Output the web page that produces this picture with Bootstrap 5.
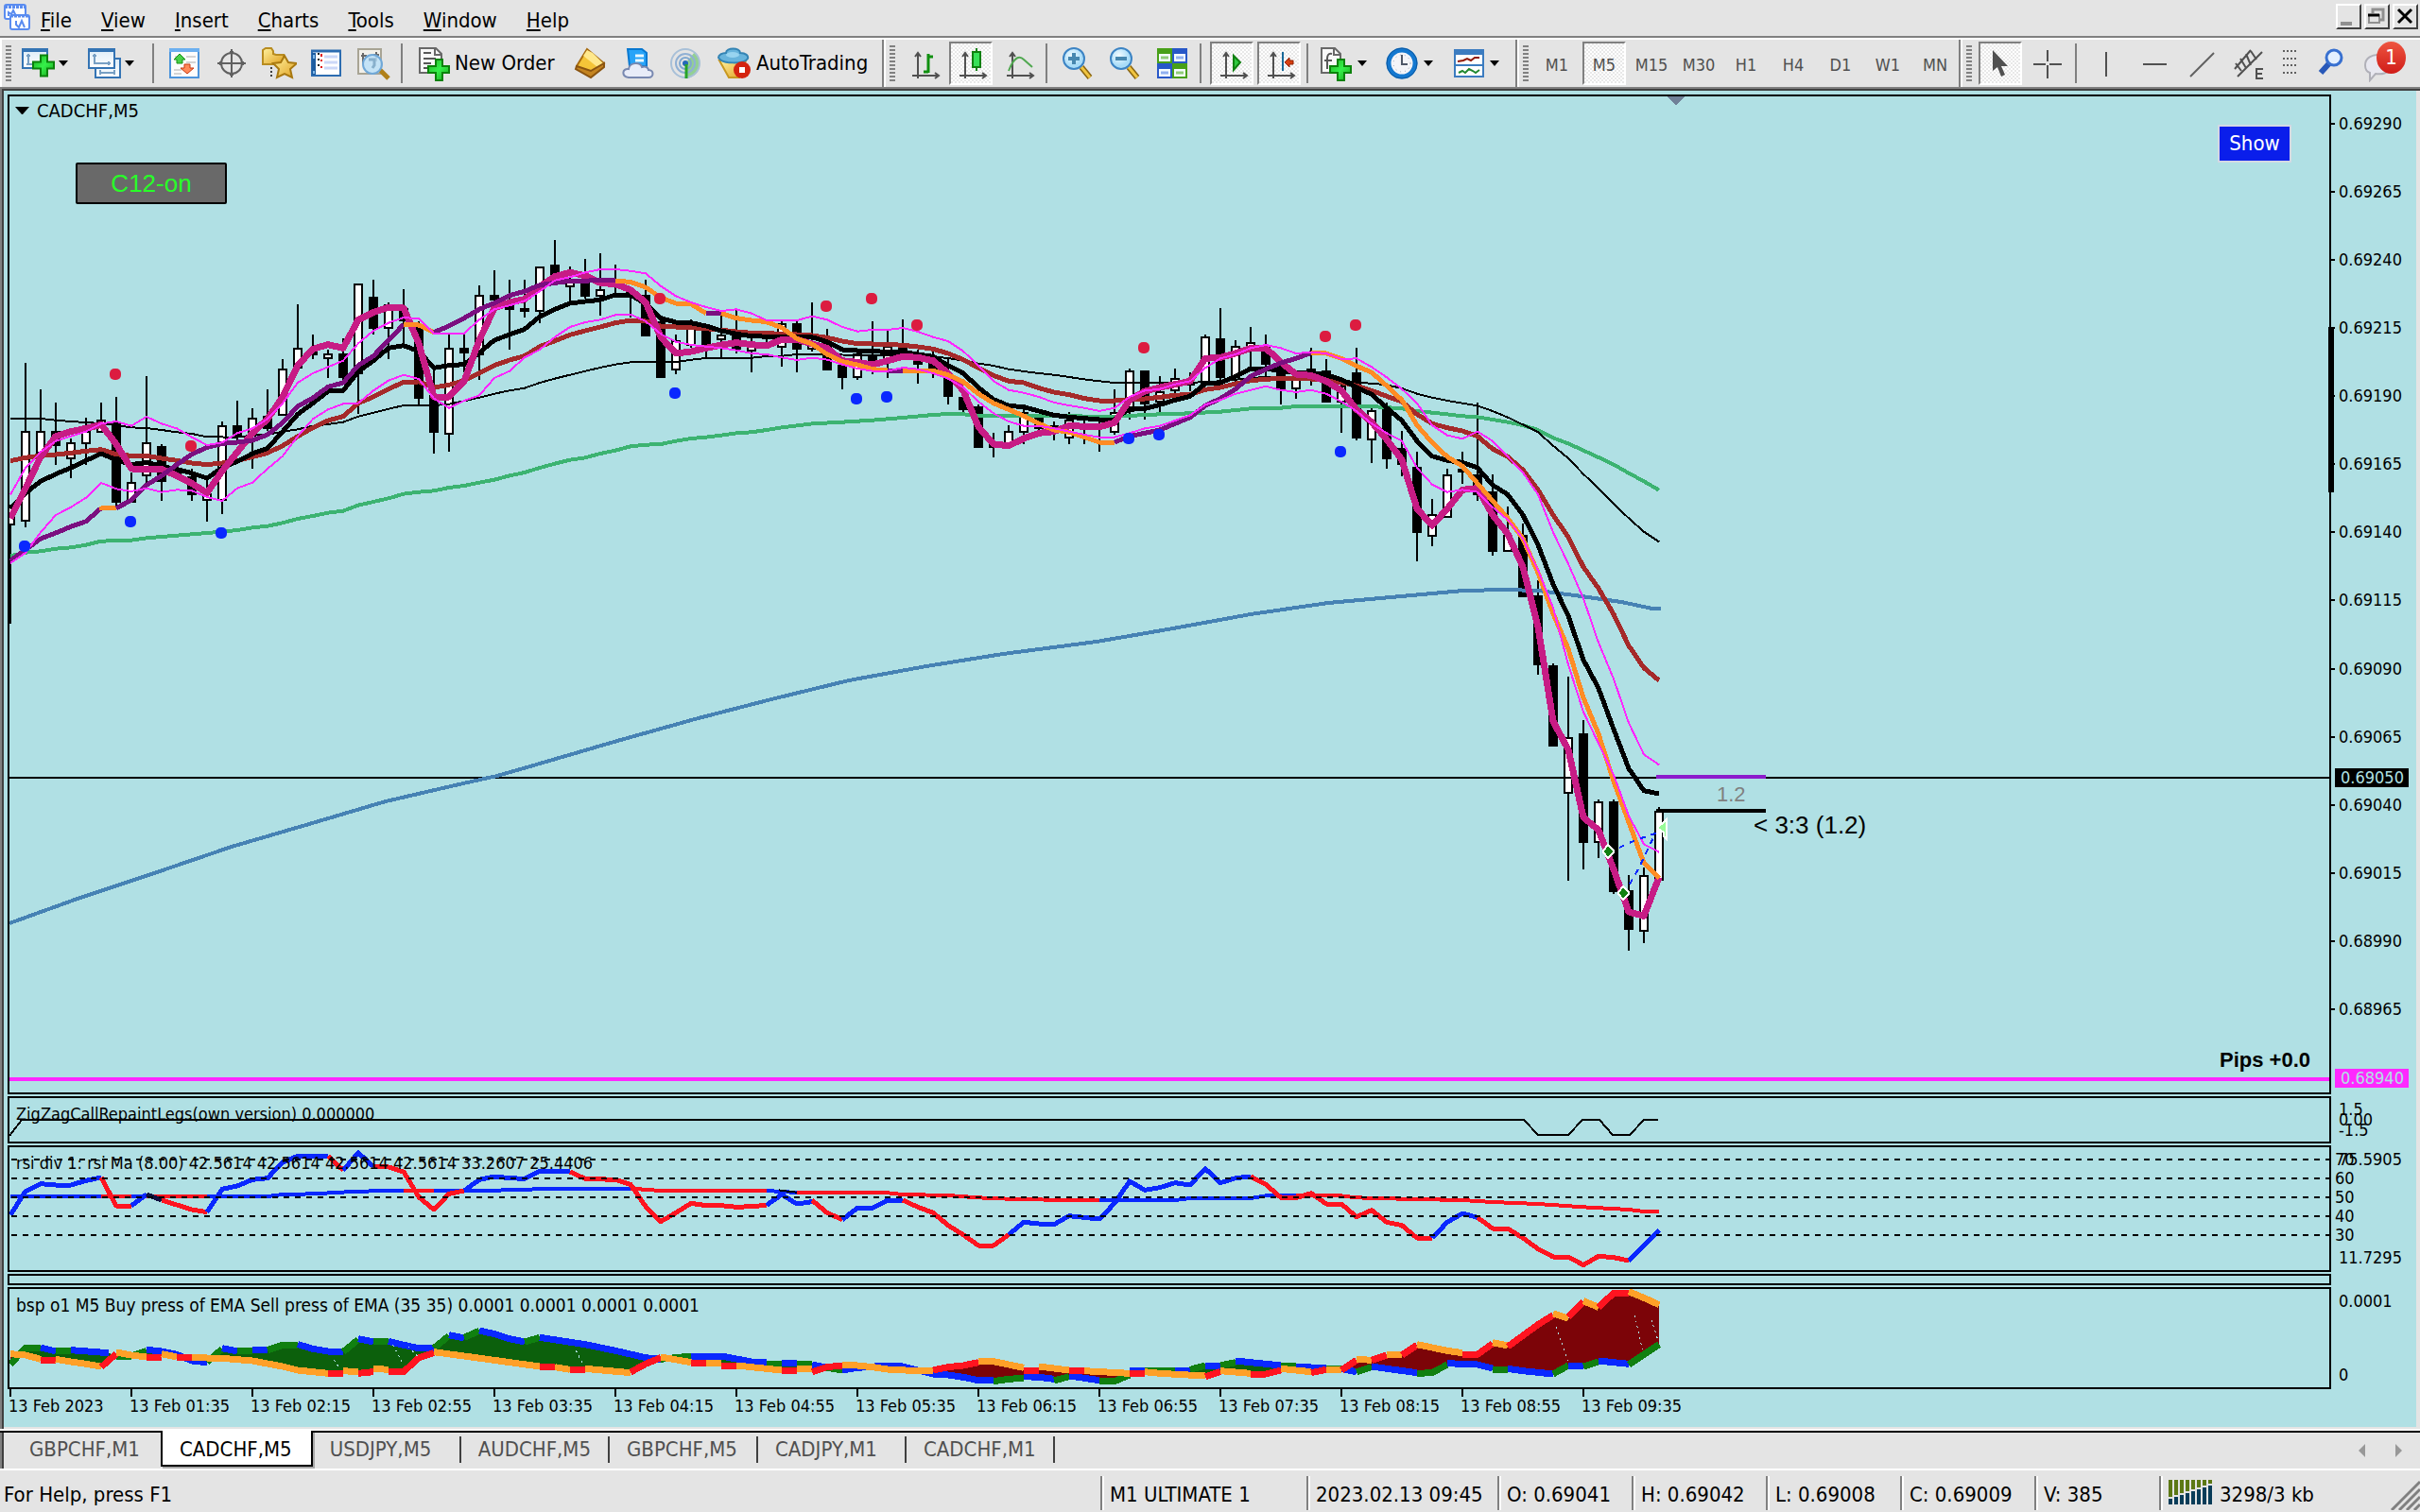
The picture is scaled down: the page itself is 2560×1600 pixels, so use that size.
<!DOCTYPE html>
<html lang="en">
<head>
<meta charset="utf-8">
<meta name="viewport" content="width=device-width, initial-scale=1">
<title>CADCHF,M5</title>
<link rel="stylesheet" href="https://cdn.jsdelivr.net/npm/bootstrap@5.3.0/dist/css/bootstrap.min.css">
<style>
  :root { --face:#e4e4e4; --sky:#b0e0e4; --edge:#808080; --deep:#404040; }
  body { background:var(--face); color:#000; font-family:"DejaVu Sans Condensed","DejaVu Sans",sans-serif; font-size:22px; line-height:24px; }
  button { font:inherit; color:inherit; }
  a { color:inherit; text-decoration:none; }
  svg { display:block; }

  .menubar { height:42px; border-bottom:2px solid #fff; box-shadow:inset 0 -2px 0 var(--edge); }
  .menubar .nav-link { color:#000; padding:8px 16px 0 15px; line-height:28px; }
  .menubar u { text-underline-offset:2px; text-decoration-thickness:2px; }
  .menubar nav { margin-left:-4px; }
  .winbtn { width:27px; height:27px; padding:0; margin-top:4px; background:var(--face); border:2px solid; border-color:#fff var(--deep) var(--deep) #fff; border-radius:0; }
  .winset { gap:3px; margin-right:2px; }

  .toolbar { height:50px; }
  .band { border-left:2px solid #fff; border-right:2px solid var(--edge); height:50px; }
  .band:last-child { border-right:0; }
  .grip { width:6px; height:38px; margin:0 5px 0 4px; background:repeating-linear-gradient(var(--edge) 0 2px, transparent 2px 4px); }
  .rule { width:2px; height:42px; margin:0 7px 0 4px; background:var(--edge); }
  .tool { width:46px; height:46px; margin:0 2px; padding:0; border:2px solid transparent; background:none; border-radius:0; }
  .tool-menu { width:66px; gap:2px; }
  .tool-order { width:163px; white-space:nowrap; gap:2px; padding-left:4px; }
  .tool-auto { width:171px; white-space:nowrap; }
  .tool-slim { width:36px; }
  .tool-on { border-color:var(--edge) #fff #fff var(--edge); background:repeating-conic-gradient(#fff 0 25%, #e8e8e8 0 50%) 0 0/4px 4px; }
  .period { font-size:18px; color:#505050; }
  .period .tool { padding-top:3px; }
  .alertdot { width:31px; height:34px; left:14px; top:-2px; background:linear-gradient(#ee5540,#d01c18); border-radius:50%; color:#fff; line-height:34px; }

  .chartwin { border:solid; border-width:2px 0 0 2px; border-color:var(--edge); box-shadow:inset 2px 2px 0 var(--deep), inset -4px -2px 0 #e4e4e4; padding:6px 4px 2px 6px; background:var(--sky); min-height:0; }
  .panes { gap:2px; min-height:0; }
  .plot { border:2px solid #000; overflow:hidden; }
  .plot > svg { position:absolute; inset:0; width:100%; height:100%; shape-rendering:crispEdges; }
  .plot .dots { shape-rendering:geometricPrecision; }
  .scale { width:90px; font-size:18px; line-height:20px; }
  .scale span { position:absolute; left:8px; transform:translateY(-50%); }
  .scale .tick::before { content:""; position:absolute; left:-8px; top:9px; width:4px; height:2px; background:#000; }
  .scale .levelmark { left:4px; }
  .scale .tag { left:4px; right:8px; padding-left:6px; background:#000; color:var(--sky); }
  .scale .tag-pink { background:#ff28ff; }
  .scale .span-bar { position:absolute; left:-3px; width:6px; background:#000; top:246px; height:175px; z-index:1; }
  .main-pane { min-height:300px; }
  .zz-pane { height:50px; }
  .rsi-pane { height:134px; }
  .idle-pane { height:12px; }
  .bsp-pane { height:108px; }
  .caption { position:absolute; left:7px; top:5px; font-size:19px; line-height:24px; white-space:nowrap; z-index:1; }
  .cap-title { top:3px; left:6px; gap:8px; font-size:20px; }
  .zz-pane .caption, .rsi-pane .caption { font-size:18px; }
  .arial { font-family:"Liberation Sans",Arial,sans-serif; }
  .c12 { left:70px; top:70px; width:160px; height:44px; background:#696969; border:2px solid #000; border-radius:2px; color:#28ff28; font-size:26px; padding:0; }
  .showbtn { right:40px; top:30px; width:78px; height:40px; padding:0; background:#0a1eeb; border:2px solid #d4d8e4; border-radius:0; color:#fff; }
  .pips { right:20px; bottom:22px; line-height:24px; font-weight:700; }
  .timescale { height:38px; padding-left:1px; font-size:18px; }
  .timescale span { width:128px; flex:none; position:relative; padding-top:4px; white-space:nowrap; }
  .timescale span::before { content:""; position:absolute; left:1px; top:-2px; width:2px; height:8px; background:#000; }

  .tabs { height:44px; border-top:2px solid #fff; }
  .tabrow { border-top:2px solid #000; border-bottom:2px solid #fff; padding-left:13px; box-shadow:inset 2px 0 0 var(--edge), inset 4px 0 0 var(--deep); }
  .tabrow .nav-link { color:#505050; min-width:157px; padding:6px 20px 6px 18px; line-height:24px; height:38px; position:relative; }
  .tabrow .nav-link + .nav-link::after { content:""; position:absolute; right:0; top:4px; width:2px; height:28px; background:var(--deep); }
  .tabrow .nav-link.active { background:#fff; color:#000; margin-top:-2px; padding-top:8px; border:solid #000; border-width:0 2px 2px; border-radius:0; box-shadow:2px 2px 0 #a8a8a8; }
  .tabrow .nav-link.active::after { display:none; }
  .turn { background:none; border:0; padding:0; width:38px; }

  .statusbar { height:44px; padding-top:6px; }
  .statusbar .cell { height:36px; padding:8px 0 0 8px; border-left:2px solid var(--edge); box-shadow:inset 2px 0 0 #fff; white-space:nowrap; }
  .w-profile { width:218px; } .w-time { width:202px; } .w-quote { width:142px; } .w-vol { width:132px; } .w-net { width:276px; }
</style>
</head>
<body class="d-flex flex-column vh-100 overflow-hidden">

<svg width="0" height="0" class="position-absolute" aria-hidden="true">
  <defs>
    <linearGradient id="gPlus" x1="0" y1="0" x2="1" y2="1"><stop offset="0" stop-color="#1fae1f"/><stop offset=".5" stop-color="#35f04a"/><stop offset="1" stop-color="#18a018"/></linearGradient>
    <linearGradient id="gGold" x1="0" y1="0" x2="1" y2="1"><stop offset="0" stop-color="#fff3a0"/><stop offset="1" stop-color="#e0a020"/></linearGradient>
    <linearGradient id="gWin" x1="0" y1="0" x2="0" y2="1"><stop offset="0" stop-color="#dcecf8"/><stop offset="1" stop-color="#fff"/></linearGradient>
    <radialGradient id="gLens" cx=".4" cy=".35"><stop offset="0" stop-color="#f2fbff"/><stop offset="1" stop-color="#a8dcf8"/></radialGradient>
    <symbol id="plus" viewBox="0 0 24 24"><path d="M9 1h7v7h7v7h-7v8h-7v-8h-8v-7h8z" fill="url(#gPlus)" stroke="#0b820b" stroke-width="2"/></symbol>
    <symbol id="axes" viewBox="0 0 36 36"><path d="M12 8v26M6 31h28" stroke="#505050" stroke-width="2" fill="none"/><path d="M9 11l3-4 3 4M30 28l4 3-4 3" fill="none" stroke="#505050" stroke-width="2"/></symbol>
    <symbol id="lens" viewBox="0 0 36 36"><path d="M22 22l9 11" stroke="#8a6510" stroke-width="6"/><path d="M22 22l9 11" stroke="#f0c440" stroke-width="3"/><circle cx="14" cy="13" r="11" fill="url(#gLens)" stroke="#3c84c4" stroke-width="2"/></symbol>
    <symbol id="caret" viewBox="0 0 12 8"><path d="M1 1h10L6 7z" fill="#000"/></symbol>
  </defs>
</svg>

<header class="menubar d-flex flex-shrink-0">
  <svg class="mt-1 ms-1 flex-shrink-0" width="28" height="28" viewBox="0 0 28 28"><rect x="1" y="1" width="22" height="15" rx="2" fill="#fff" stroke="#5a8cf0" stroke-width="2"/><path d="M1 3h22" stroke="#5a8cf0" stroke-width="4" stroke-dasharray="3 1"/><path d="M5 13V9l3 2 2-4 3 6" stroke="#5a8cf0" stroke-width="2" fill="none"/><rect x="7" y="12" width="20" height="15" rx="2" fill="#fff" stroke="#5a8cf0" stroke-width="2"/><path d="M7 13h20" stroke="#5a8cf0" stroke-width="3" stroke-dasharray="3 1"/><path d="M13 18v4l3 3 3-7 3 7" stroke="#5a8cf0" stroke-width="2" fill="none"/></svg>
  <nav class="d-flex" aria-label="Main menu">
    <a class="nav-link" href="#"><u>F</u>ile</a><a class="nav-link" href="#"><u>V</u>iew</a><a class="nav-link" href="#"><u>I</u>nsert</a><a class="nav-link" href="#"><u>C</u>harts</a><a class="nav-link" href="#"><u>T</u>ools</a><a class="nav-link" href="#"><u>W</u>indow</a><a class="nav-link" href="#"><u>H</u>elp</a>
  </nav>
  <div class="winset ms-auto d-flex">
    <button class="winbtn" aria-label="Minimize"><svg width="23" height="23" viewBox="0 0 23 23"><path d="M3 19h12" stroke="#909090" stroke-width="4"/></svg></button>
    <button class="winbtn" aria-label="Restore"><svg width="23" height="23" viewBox="0 0 23 23" fill="none"><path d="M7 8V4h11v11h-3" stroke="#909090" stroke-width="3"/><path d="M3 10h11v8H3z" stroke="#909090" stroke-width="2"/><path d="M2 10h12" stroke="#000" stroke-width="3"/></svg></button>
    <button class="winbtn" aria-label="Close"><svg width="23" height="23" viewBox="0 0 23 23"><path d="M4 4l14 14M18 4L4 18" stroke="#000" stroke-width="3"/></svg></button>
  </div>
</header>

<div class="toolbar d-flex flex-shrink-0" role="toolbar">
  <div class="band d-flex align-items-center pe-2">
    <i class="grip"></i>
    <button class="tool tool-menu d-flex align-items-center" aria-label="New chart"><svg width="38" height="36" viewBox="0 0 38 36"><rect x="3" y="3" width="26" height="20" fill="url(#gWin)" stroke="#3474b4" stroke-width="2"/><path d="M2 4h28" stroke="#3474b4" stroke-width="4"/><path d="M9 8v11h6M7 10h4M7 19h3" stroke="#78a0c4" stroke-width="2" fill="none"/><use href="#plus" x="13" y="8" width="24" height="25"/></svg><svg width="12" height="8"><use href="#caret"/></svg></button>
    <button class="tool tool-menu d-flex align-items-center" aria-label="Profiles"><svg width="38" height="36" viewBox="0 0 38 36"><rect x="10" y="13" width="26" height="20" fill="url(#gWin)" stroke="#3474b4" stroke-width="2"/><path d="M15 28h16M15 25v5M30 25v5" stroke="#78a0c4" stroke-width="2"/><rect x="3" y="3" width="27" height="20" fill="url(#gWin)" stroke="#3474b4" stroke-width="2"/><path d="M2 4h29" stroke="#3474b4" stroke-width="4"/><path d="M9 8v10h17M7 10h4M24 16v4" stroke="#78a0c4" stroke-width="2" fill="none"/></svg><svg width="12" height="8"><use href="#caret"/></svg></button>
    <i class="rule"></i>
    <button class="tool" aria-label="Market Watch"><svg class="m-auto" width="36" height="36" viewBox="0 0 36 36"><rect x="3" y="3" width="30" height="30" fill="#fcfcfc" stroke="#4c94dc" stroke-width="2"/><path d="M2 4h32" stroke="#6cb0f0" stroke-width="4"/><path d="M8 11h4M20 11h10M20 17h10M7 25h8M7 29h8" stroke="#d4d4d4" stroke-width="2"/><path d="M13 8l6 6h-3v4h-6v-4H7z" fill="#48d048" stroke="#189018"/><path d="M21 29l-7-6h4v-4h6v4h4z" fill="#ff8858" stroke="#c83810"/></svg></button>
    <button class="tool" aria-label="Data Window"><svg class="m-auto" width="36" height="36" viewBox="0 0 36 36" fill="none" stroke="#606060" stroke-width="2"><circle cx="18" cy="18" r="11"/><path d="M18 3v30M3 18h30"/><path d="M16 6h4M16 30h4M6 16v4M30 16v4"/></svg></button>
    <button class="tool" aria-label="Navigator"><svg class="m-auto" width="38" height="36" viewBox="0 0 38 36"><path d="M2 19V4l3-2h6l2 3v3l3 1h8v10z" fill="url(#gGold)" stroke="#b88c20" stroke-width="2"/><path d="M11 22v12" stroke="#404040" stroke-width="2" stroke-dasharray="2 2"/><path d="M25 10l4 7 9 1-7 6 2 9-8-4-8 4 2-9-6-6 8-1z" fill="url(#gGold)" stroke="#a87810" stroke-width="2"/></svg></button>
    <button class="tool" aria-label="Terminal"><svg class="m-auto" width="36" height="36" viewBox="0 0 36 36"><rect x="3" y="5" width="30" height="26" fill="#fff" stroke="#2c6cb0" stroke-width="2"/><path d="M2 5h32" stroke="#2c6cb0" stroke-width="3"/><path d="M5 7v23" stroke="#1c5ca0" stroke-width="4"/><path d="M5 9v4M5 26v3" stroke="#80b8e8" stroke-width="2"/><path d="M16 11h14M16 17h14M16 23h14" stroke="#ccd8f8" stroke-width="3"/><path d="M13 8v3M13 14v2M13 21v2" stroke="#e01818" stroke-width="2"/><path d="M9 8h2M9 14h2M9 20h2" stroke="#202020" stroke-width="2"/></svg></button>
    <button class="tool" aria-label="Strategy Tester"><svg class="m-auto" width="38" height="36" viewBox="0 0 38 36"><rect x="3" y="3" width="24" height="26" fill="#f2f0ea" stroke="#a8a494" stroke-width="2"/><path d="M8 7v12M6 10h6M22 6v10M19 9h6" stroke="#686868" stroke-width="2"/><path d="M26 25l9 9" stroke="#b08018" stroke-width="5"/><circle cx="18" cy="19" r="10" fill="#bce0f8" fill-opacity=".85" stroke="#70a8d8" stroke-width="2"/><path d="M14 14h6v6l-2 3" stroke="#88b0cc" stroke-width="3" fill="none"/></svg></button>
    <i class="rule"></i>
    <button class="tool tool-order d-flex align-items-center"><svg class="flex-shrink-0" width="38" height="38" viewBox="0 0 38 38"><path d="M3 3h17l6 6v20H3z" fill="#f8f8f8" stroke="#686868" stroke-width="2"/><path d="M19 3v7h7" fill="none" stroke="#686868" stroke-width="2"/><path d="M7 8h8M7 14h13M7 19h8M7 24h6" stroke="#585858" stroke-width="2"/><use href="#plus" x="11" y="14" width="24" height="24"/></svg>New Order</button>
    <button class="tool" aria-label="MetaEditor"><svg class="m-auto" width="36" height="36" viewBox="0 0 36 36"><path d="M14 3l18 15-14 14L3 21z" fill="#f4c438" stroke="#a86c10" stroke-width="2"/><path d="M14 4l6 3 11 11-6 4L10 10z" fill="#ffe88c"/><path d="M3 21l15 5 14-8v4L18 33 2 24z" fill="#c48420" stroke="#8a5410" stroke-width="2"/></svg></button>
    <button class="tool" aria-label="Cloud"><svg class="m-auto" width="36" height="36" viewBox="0 0 36 36"><path d="M7 3h15l5 4v14H9z" fill="#28a4f8" stroke="#0878d0" stroke-width="2"/><path d="M15 10h9M15 15h9" stroke="#e8f8ff" stroke-width="3"/><path d="M8 33c-8-1-7-10 0-9 1-7 12-8 14-2 5-2 7 2 7 3 6 0 6 8 0 8z" fill="#e8ecf8" stroke="#7888b0" stroke-width="2"/></svg></button>
    <button class="tool" aria-label="Signals"><svg class="m-auto" width="36" height="36" viewBox="0 0 36 36" fill="none"><path d="M18 18L28 6a16 16 0 0 1-9 28z" fill="#70c870" fill-opacity=".7"/><circle cx="18" cy="18" r="15" stroke="#a8c0d8" stroke-width="2"/><circle cx="18" cy="18" r="10" stroke="#90b0d4" stroke-width="2"/><circle cx="18" cy="18" r="6" stroke="#80a8d0" stroke-width="2"/><circle cx="18" cy="18" r="3" fill="#2468b8"/><path d="M19 19v15" stroke="#28a428" stroke-width="3"/></svg></button>
    <button class="tool tool-auto d-flex align-items-center gap-1 text-start"><svg class="ms-1 flex-shrink-0" width="38" height="36" viewBox="0 0 38 36"><path d="M3 15h28l-7 18H13z" fill="url(#gGold)" stroke="#c89820" stroke-width="2"/><path d="M2 12c0-3 4-5 8-5 0-6 15-6 15 0 6 0 9 3 8 6-4 6-27 6-31-1z" fill="#68b4dc" stroke="#3484b4" stroke-width="2"/><ellipse cx="17" cy="9" rx="7" ry="3" fill="#98d4f0"/><circle cx="27" cy="25" r="9" fill="#d42410"/><rect x="24" y="22" width="6" height="6" fill="#fff"/></svg>AutoTrading</button>
  </div>
  <div class="band d-flex align-items-center">
    <i class="grip"></i>
    <button class="tool" aria-label="Bar chart"><svg class="m-auto" width="36" height="36" viewBox="0 0 36 36"><use href="#axes"/><path d="M23 8v20M18 27h5M23 11h5" stroke="#109010" stroke-width="3"/></svg></button>
    <button class="tool tool-on" aria-label="Candlesticks"><svg class="m-auto" width="36" height="36" viewBox="0 0 36 36"><use href="#axes"/><path d="M24 2v24" stroke="#108010" stroke-width="2"/><rect x="20" y="6" width="8" height="16" fill="#38e058" stroke="#108010" stroke-width="2"/></svg></button>
    <button class="tool" aria-label="Line chart"><svg class="m-auto" width="36" height="36" viewBox="0 0 36 36"><use href="#axes"/><path d="M8 26C14 10 20 10 24 14l9 8" stroke="#50a850" stroke-width="2" fill="none"/></svg></button>
    <i class="rule"></i>
    <button class="tool" aria-label="Zoom in"><svg class="m-auto" width="36" height="36" viewBox="0 0 36 36"><use href="#lens"/><path d="M14 7v12M8 13h12" stroke="#4888b0" stroke-width="4"/></svg></button>
    <button class="tool" aria-label="Zoom out"><svg class="m-auto" width="36" height="36" viewBox="0 0 36 36"><use href="#lens"/><path d="M8 13h12" stroke="#4888b0" stroke-width="4"/></svg></button>
    <button class="tool" aria-label="Tile windows"><svg class="m-auto" width="36" height="36" viewBox="0 0 36 36"><path d="M2 2h16v16H2zM18 18h16v16H18z" fill="#48a018"/><path d="M18 2h16v16H18zM2 18h16v16H2z" fill="#2858c8"/><path d="M4 8h12v8H4zM20 8h12v8H20zM4 24h12v8H4zM20 24h12v8H20z" fill="#f4fbff"/><path d="M6 12h8M22 28h8" stroke="#90cc78" stroke-width="3"/><path d="M22 12h8M6 28h8" stroke="#90b0f0" stroke-width="3"/></svg></button>
    <i class="rule"></i>
    <button class="tool tool-on" aria-label="Auto scroll"><svg class="m-auto" width="36" height="36" viewBox="0 0 36 36"><use href="#axes"/><path d="M20 10v15l7-8z" fill="#30c840" stroke="#108010" stroke-width="2"/></svg></button>
    <button class="tool tool-on" aria-label="Chart shift"><svg class="m-auto" width="36" height="36" viewBox="0 0 36 36"><use href="#axes"/><path d="M22 6v20" stroke="#186898" stroke-width="2"/><path d="M24 17l5-5v3h4v4h-4v3z" fill="#d84010" stroke="#902000"/></svg></button>
    <i class="rule"></i>
    <button class="tool tool-menu d-flex align-items-center" aria-label="Indicators"><svg width="38" height="38" viewBox="0 0 38 38"><path d="M3 3h14l6 6v20H3z" fill="#f8f8f8" stroke="#686868" stroke-width="2"/><path d="M16 3v7h7" fill="none" stroke="#686868" stroke-width="2"/><path d="M14 9c-4-1-5 2-5 5v11M6 16h8" stroke="#585858" stroke-width="2" fill="none"/><use href="#plus" x="11" y="14" width="24" height="24"/></svg><svg width="12" height="8"><use href="#caret"/></svg></button>
    <button class="tool tool-menu d-flex align-items-center" aria-label="Periods"><svg width="38" height="36" viewBox="0 0 38 36"><circle cx="18" cy="18" r="14" fill="#f4f4f8" stroke="#1478d0" stroke-width="5"/><circle cx="18" cy="18" r="16" fill="none" stroke="#0c58a0" stroke-width="1"/><path d="M18 9v10h6" stroke="#505868" stroke-width="2" fill="none"/><circle cx="18" cy="18" r="9" fill="none" stroke="#98a0b0" stroke-dasharray="1 4"/></svg><svg width="12" height="8"><use href="#caret"/></svg></button>
    <button class="tool tool-menu d-flex align-items-center me-1" aria-label="Templates"><svg width="38" height="36" viewBox="0 0 38 36"><rect x="4" y="4" width="30" height="28" fill="#fff" stroke="#3c7cc0" stroke-width="2"/><path d="M3 6h32" stroke="#3c7cc0" stroke-width="6"/><path d="M4 20h30" stroke="#3c7cc0" stroke-width="2"/><path d="M7 16l6-1 4-2 4 2 4-3h5" stroke="#901808" stroke-width="2" fill="none"/><path d="M8 28l4-2 3 2 4-4 4 2 3 2 4-3" stroke="#208830" stroke-width="2" fill="none"/></svg><svg width="12" height="8"><use href="#caret"/></svg></button>
  </div>
  <div class="band d-flex align-items-center period">
    <i class="grip"></i>
    <button class="tool">M1</button><button class="tool tool-on">M5</button><button class="tool">M15</button><button class="tool">M30</button><button class="tool">H1</button><button class="tool">H4</button><button class="tool">D1</button><button class="tool">W1</button><button class="tool">MN</button>
  </div>
  <div class="band d-flex align-items-center flex-grow-1">
    <i class="grip"></i>
    <button class="tool tool-on" aria-label="Cursor"><svg class="m-auto" width="36" height="36" viewBox="0 0 36 36"><path d="M10 4v22l5-4 4 10 4-2-4-9h7z" fill="#505050"/></svg></button>
    <button class="tool" aria-label="Crosshair"><svg class="m-auto" width="36" height="36" viewBox="0 0 36 36"><path d="M18 4v12M18 20v14M3 19h13M20 19h13" stroke="#505050" stroke-width="2"/></svg></button>
    <i class="rule"></i>
    <button class="tool" aria-label="Vertical line"><svg class="m-auto" width="36" height="36" viewBox="0 0 36 36"><path d="M17 6v26" stroke="#505050" stroke-width="2"/></svg></button>
    <button class="tool" aria-label="Horizontal line"><svg class="m-auto" width="36" height="36" viewBox="0 0 36 36"><path d="M6 19h25" stroke="#505050" stroke-width="2"/></svg></button>
    <button class="tool" aria-label="Trendline"><svg class="m-auto" width="36" height="36" viewBox="0 0 36 36"><path d="M6 32L31 7" stroke="#606060" stroke-width="2"/></svg></button>
    <button class="tool" aria-label="Equidistant channel"><svg class="m-auto" width="36" height="36" viewBox="0 0 36 36" fill="none" stroke="#505050" stroke-width="2"><path d="M3 24L20 4M6 32L32 6M4 18l6 8M9 13l6 10M15 8l5 12M20 5l6 9"/><path d="M33 24h-7v10h7M26 29h6"/></svg></button>
    <button class="tool tool-slim" aria-label="Fibonacci"><svg class="m-auto" width="24" height="36" viewBox="0 0 24 36"><path d="M3 5h16M3 13h16M3 20h16M3 28h16" stroke="#606060" stroke-width="2" stroke-dasharray="2 2"/></svg></button>
    <button class="tool" aria-label="Search"><svg class="m-auto" width="36" height="36" viewBox="0 0 36 36"><path d="M13 18L4 28" stroke="#2858b8" stroke-width="6"/><circle cx="18" cy="12" r="8" fill="#e4f0ff" stroke="#3870d0" stroke-width="3"/></svg></button>
    <button class="tool position-relative ms-1" aria-label="1 alert"><svg width="44" height="40" viewBox="0 0 44 40"><path d="M2 22c0-16 30-14 27 2-2 7-10 8-16 7l-6 7v-8c-3-1-5-4-5-8z" fill="#e8e8f0" stroke="#b0b0b8" stroke-width="2"/></svg><span class="alertdot position-absolute">1</span></button>
  </div>
</div>

<main class="chartwin d-flex flex-column flex-grow-1">
  <div class="panes d-flex flex-column flex-grow-1">
    <section class="main-pane d-flex flex-grow-1">
      <div class="plot position-relative flex-grow-1">
        <svg id="price" role="img" aria-label="CADCHF five minute chart"></svg>
        <span class="caption cap-title d-flex align-items-center"><svg width="15" height="8" viewBox="0 0 15 8"><path d="M0 0h15L8 8H7z"/></svg>CADCHF,M5</span>
        <button class="c12 arial position-absolute">C12-on</button>
        <button class="showbtn position-absolute">Show</button>
        <span class="pips arial position-absolute">Pips +0.0</span>
      </div>
      <div class="scale position-relative" id="priceScale"><i class="span-bar"></i></div>
    </section>
    <section class="zz-pane d-flex flex-shrink-0">
      <div class="plot position-relative flex-grow-1"><span class="caption">ZigZagCallRepaintLegs(own version) 0.000000</span><svg id="zz"></svg></div>
      <div class="scale position-relative" id="zzScale"></div>
    </section>
    <section class="rsi-pane d-flex flex-shrink-0">
      <div class="plot position-relative flex-grow-1"><span class="caption">rsi div 1: rsi Ma (8.00) 42.5614 42.5614 42.5614 42.5614 33.2607 25.4406</span><svg id="rsi"></svg></div>
      <div class="scale position-relative" id="rsiScale"></div>
    </section>
    <section class="idle-pane d-flex flex-shrink-0"><div class="plot flex-grow-1"></div><div class="scale"></div></section>
    <section class="bsp-pane d-flex flex-shrink-0">
      <div class="plot position-relative flex-grow-1"><span class="caption">bsp o1 M5 Buy press of EMA Sell press of EMA (35 35) 0.0001 0.0001 0.0001 0.0001</span><svg id="bsp"></svg></div>
      <div class="scale position-relative" id="bspScale"></div>
    </section>
    <div class="timescale d-flex flex-shrink-0" id="times"></div>
  </div>
</main>

<div class="tabs d-flex flex-column flex-shrink-0">
  <nav class="tabrow d-flex flex-grow-1" aria-label="Open charts">
    <a class="nav-link" href="#">GBPCHF,M1</a><a class="nav-link active" href="#" aria-current="page">CADCHF,M5</a><a class="nav-link" href="#">USDJPY,M5</a><a class="nav-link" href="#">AUDCHF,M5</a><a class="nav-link" href="#">GBPCHF,M5</a><a class="nav-link" href="#">CADJPY,M1</a><a class="nav-link" href="#">CADCHF,M1</a>
    <span class="ms-auto d-flex me-1"><button class="turn" aria-label="Previous tabs"><svg class="m-auto" width="8" height="14" viewBox="0 0 8 14"><path d="M7 0v14L0 7z" fill="#989898"/></svg></button><button class="turn" aria-label="Next tabs"><svg class="m-auto" width="8" height="14" viewBox="0 0 8 14"><path d="M1 0v14l7-7z" fill="#989898"/></svg></button></span>
  </nav>
</div>

<footer class="statusbar d-flex flex-shrink-0">
  <div class="flex-grow-1 pt-2 ps-1">For Help, press F1</div>
  <div class="cell w-profile">M1 ULTIMATE 1</div>
  <div class="cell w-time">2023.02.13 09:45</div>
  <div class="cell w-quote">O: 0.69041</div>
  <div class="cell w-quote">H: 0.69042</div>
  <div class="cell w-quote">L: 0.69008</div>
  <div class="cell w-quote">C: 0.69009</div>
  <div class="cell w-vol">V: 385</div>
  <div class="cell w-net d-flex position-relative pt-0"><svg id="net" class="flex-shrink-0 mt-1 me-2" width="46" height="26"></svg><span class="pt-2">3298/3 kb</span>
    <svg class="position-absolute end-0 bottom-0" width="32" height="32" viewBox="0 0 32 32"><path d="M2 32L32 2M10 32L32 10M18 32l14-14M26 32l6-6" stroke="#808080" stroke-width="3"/></svg></div>
</footer>

<script src="https://cdn.jsdelivr.net/npm/bootstrap@5.3.0/dist/js/bootstrap.bundle.min.js"></script>
<script>
// Bars are 16px apart; every series is a flat list "bar value bar value ...",
// values counted downwards in thirds of a pixel from the top of its scale.
const NS = 'http://www.w3.org/2000/svg';
const barX = i => 11 + 16 * i;
function add(parent, tag, attrs) {
  const el = document.createElementNS(NS, tag);
  for (const k in attrs) el.setAttribute(k, attrs[k]);
  return parent.appendChild(el);
}
const layer = (id, dy) => add(document.getElementById(id), 'g', { transform: `translate(-10,${-dy})` });
function points(list, base) {
  const n = list.trim().split(/[\s,]+/).map(Number), out = [];
  for (let k = 0; k < n.length; k += 2) out.push([barX(n[k]), base + n[k + 1] / 3]);
  return out;
}
const draw = (g, pts, color, w) => add(g, 'polyline', { points: pts.map(p => p.join()).join(' '), fill: 'none', stroke: color, 'stroke-width': w, 'stroke-linejoin': 'round' });
const series = (g, list, base, color, w) => draw(g, points(list, base), color, w);

/* ---- price pane ---- */
const P = layer('price', 102);
// high, body top, body bottom, low, 1 = rising
const candles = [
[0, `880 890 950 1258 1|432 650 934 953 1|517 650 720 730 1|558 650 695 755 0|670 686 736 797 1|606 645 689 755 1|558 613 652 652 1|540 618 875 887 0|780 812 875 875 1|474 686 790 815 1|692 697 808 870 0|765 770 785 790 0|768 790 852 870 0|790 848 868 935 1|618 632 868 911 1|552 631 668 680 0|576 608 660 768 1|517 600 640 650 0|420 451 598 600 1|246 386 450 460 1|342 395 410 420 0|390 403 418 480 1|354 403 478 485 0|180 182 465 594 1|168 222 322 342 0|240 248 326 420 1|198 255 300 375 0|300 310 545 565 0|440 535 653 720 0|342 386 658 714 1|342 385 402 462 0|186 218 406 486 1|138 216 234 262 0|168 235 264 390 0|168 258 270 288 0|126 128 268 306 1|42 120 165 170 0|126 165 190 240 1|102 165 222 230 0|84 200 223 280 1|120 180 190 210 1|190 205 215 290 0|168 216 347 347 0|290 300 479 479 0|342 362 455 468 1|295 305 380 385 1|312 320 380 415 0|275 343 362 415 1|262 340 390 402 0|350 375 398 462 1|350 372 380 385 0|300 306 382 444 1|300 306 388 462 0|240 370 390 395 1|324 345 455 455 0|420 440 479 516 0|390 400 479 486 1|300 410 425 468 0|330 380 425 480 1|294 375 400 410 0|390 405 438 498 0|396 430 460 480 0|420 470 539 564 0|520 540 581 595 0|565 570 701 701 0|654 685 700 732 0|630 650 690 700 1|575 590 652 690 1|600 608 640 650 0|618 630 645 678 0|588 610 670 690 1|610 625 640 690 0|615 625 640 714 0|516 590 652 660 1|450 458 590 612 1|456 457 562 612 0|474 520 558 594 1`],
[180, `270 297 340 345 1|280 310 320 342 0|164 165 320 320 1|78 175 300 310 0|180 200 300 310 1|138 183 200 270 1|162 195 260 300 0|240 250 335 384 0|285 300 333 366 1|204 272 290 324 0|240 277 377 377 0|310 325 380 474 1|204 283 491 498 0|390 399 495 570 1|380 390 557 588 0|468 520 575 612 0|534 583 791 882 0|684 729 801 834 1|588 608 741 744 1|534 585 600 636 0|378 605 670 690 0|606 660 851 864 0|708 800 850 852 1|762 800 995 995 0`],
[1080, `42 90 311 342 0|306 312 570 570 0|348 542 718 996 1|486 528 875 960 0|738 745 873 924 1|738 744 1032 1038 0|978 1028 1151 1218 0|954 980 1156 1194 1|762 775 995 996 1`]];
let bar = 0;
for (const [off, rows] of candles) for (const row of rows.split('|')) {
  const [h, t, b, l, up] = row.split(' ').map(Number), y = v => Math.round((240 + (v + off) / 3) / 2) * 2, x = barX(bar++);
  add(P, 'rect', { x: x - 1, y: y(h), width: 2, height: Math.max(2, y(l) - y(h)) });
  add(P, 'rect', { x: x - 5, y: y(t), width: 10, height: Math.max(4, y(b) - y(t)) });
  if (up) add(P, 'rect', { x: x - 3, y: y(t) + 2, width: 6, height: Math.max(2, y(b) - y(t) - 4), fill: '#fff' });
}
const across = (g, y, color, w) => add(g, 'rect', { x: 10, y: y - w / 2, width: '100%', height: w, fill: color });
across(P, 823, '#000', 2);
draw(P, [[10,977],[82,951],[163,924],[245,896],[327,872],[408,848],[490,829],[526,821],[571,808],[653,784],[735,761],[816,740],[898,720],[980,705],[1061,692],[1160,679],[1241,665],[1323,650],[1405,638],[1482,631],[1548,625],[1593,624],[1627,625],[1666,630],[1715,637],[1748,644],[1757,644]], '#4682b4', 4);
series(P, `0 1045 1 1034 2 1030 3 1022 4 1018 5 1010 6 998 8 995 9 988 10 984 11 980 12 976 13 972 14 968 15 963 16 955 17 950 18 940 19 927 20 918 21 908 22 902 23 884 24 873 25 862 26 848 27 842 28 838 29 828 30 822 31 812 32 803 33 790 34 780 35 765 36 752 37 740 38 733 39 720 40 710 41 697 42 692 43 690 44 680 45 672 46 668 47 662 48 655 49 652 50 645 51 637 53 625 55 620 57 614 59 606 61 597 62 594 63 595 64 600 73 602 76 595 78 592 80 587 82 577 84 575 85 570 90 570 92 577 93 585 95 595 96 601 97 604 98 612 99 620 100 630 101 645 102 670 103 688 104 710 105 732 106 755 107 782 108 808 109 836`, 240, '#3cb371', 4);
series(P, `0 608 1 608 2 609 3 614 4 618 5 621 6 624 7 630 8 637 9 639 10 645 11 652 12 657 13 667 15 668 16 662 17 660 18 650 19 643 20 632 21 627 22 620 23 602 24 590 25 578 26 567 28 567 29 563 30 553 31 542 32 530 33 520 34 512 35 495 36 482 37 470 38 458 39 447 40 437 41 430 44 430 45 422 46 417 49 416 50 411 51 410 52 405 58 408 60 411 61 412 62 417 63 425 64 434 65 441 66 452 67 459 68 465 69 470 70 477 71 484 72 490 73 495 78 495 79 492 80 490 81 485 82 480 83 477 86 480 88 485 89 495 90 497 91 502 92 513 93 530 94 542 95 552 96 560 97 568 98 585 99 605 100 628 101 652 102 695 103 735 104 785 105 830 106 880 107 925 108 968 109 1000`, 240, '#000', 2);
series(P, `0 743 1 733 2 727 3 723 4 718 5 712 6 707 7 722 8 727 9 727 10 735 11 742 12 750 13 755 14 750 15 743 16 730 17 718 18 695 19 665 20 638 21 615 22 602 23 560 24 540 25 515 26 493 27 492 28 510 29 502 30 488 31 465 32 440 33 423 34 410 35 380 36 362 37 343 38 330 39 318 40 305 41 297 42 300 43 315 44 318 45 320 46 323 47 328 48 333 49 337 50 338 51 340 52 342 53 345 54 352 55 363 56 371 57 372 58 373 59 376 60 381 61 388 62 402 63 422 64 448 65 472 66 490 67 495 68 512 69 525 70 533 71 545 72 552 73 552 74 548 75 546 76 541 77 535 78 532 79 517 80 510 81 498 82 488 83 484 84 481 86 483 87 488 88 494 89 505 90 520 91 538 92 555 93 595 94 625 95 638 96 648 97 665 98 705 99 730 100 772 101 835 102 915 103 985 104 1080 105 1148 106 1230 107 1330 108 1400 109 1440`, 240, '#a52a2a', 5);
series(P, `0 895 1 845 2 808 3 785 4 765 5 742 6 720 7 740 8 755 9 748 10 760 11 770 12 782 13 798 14 765 15 745 16 720 17 703 18 650 19 595 20 560 21 522 22 520 23 460 24 425 25 385 26 377 27 395 28 448 29 440 30 437 31 400 32 360 33 342 34 325 35 285 36 262 37 243 38 237 39 232 40 216 41 216 42 245 43 290 44 303 45 305 46 315 47 330 48 340 49 347 51 350 53 350 54 365 55 390 56 393 58 397 59 397 60 405 61 412 62 440 63 465 64 510 65 548 66 568 67 572 68 585 69 598 70 604 71 608 72 612 73 612 74 577 75 577 76 565 77 550 78 538 79 498 80 495 81 475 82 450 83 450 84 458 85 463 86 463 87 470 88 485 89 510 90 532 91 575 92 615 93 680 94 728 95 742 96 748 97 765 98 820 99 850 100 915 101 1010 102 1135 103 1235 104 1375 105 1465 106 1595 107 1720 108 1790 109 1800`, 240, '#000', 5);
series(P, `0 925 1 830 2 730 3 665 4 650 5 640 6 628 7 690 8 768 10 770 11 790 12 815 13 845 14 775 15 715 16 655 17 610 18 540 19 440 20 388 21 374 22 385 23 295 24 272 25 255 26 258 27 370 28 540 29 540 30 490 31 360 32 258 33 240 34 230 35 190 36 158 37 145 38 155 39 178 40 182 41 200 42 240 43 350 44 402 45 396 46 385 47 375 48 368 49 374 50 378 51 358 52 358 53 372 54 385 55 425 56 430 57 438 58 425 59 412 60 415 61 425 62 465 63 520 64 635 65 690 66 695 67 672 68 655 69 650 70 632 72 635 73 622 74 550 75 522 76 510 77 500 78 490 79 418 80 415 81 402 82 385 83 385 84 430 85 468 86 472 87 490 88 520 89 580 90 620 91 675 92 740 93 895 94 948 95 895 96 835 97 830 98 915 99 975 100 1080 101 1270 102 1570 103 1660 104 1875 105 1915 106 2040 107 2175 108 2188 109 2065`, 240, '#c71c85', 7);
const V = '#7b0f80', O = '#ff8c24';
for (const [c, list] of [
 [V, `0 1060 1 1025 2 990 3 972 4 952 5 935 6 893`], [O, `6 888 6 893 7 893`],
 [V, `7 893 8 868 9 820 10 790 11 755 12 722 13 700 14 688 15 684 16 678 17 660 18 622 19 570 20 543 21 508 22 495 23 440 24 410 25 360 26 310`],
 [O, `26 310 27 312 28 335`], [V, `28 335 29 315 30 290 31 262 32 242 33 218 34 205 35 185 36 178 37 172 38 172 39 168 40 168`],
 [O, `40 172 41 175 42 192 43 225 44 243 45 245 46 275`], [V, `46 275 47 275`],
 [O, `47 275 48 290 49 297 50 302 51 320 52 355 53 372 54 405 55 428 56 438 57 452 58 456`], [V, `58 456 59 456`],
 [O, `59 456 60 456 61 457 62 470 63 492 64 530 65 560 66 580 67 600 68 625 69 645 70 652 71 668 72 684 73 684`],
 [V, `73 684 74 665 75 655 76 645 77 625 78 605 79 568 80 545 81 515 82 475 83 452 84 432 85 418 86 400`],
 [O, `86 400 87 402 88 418 89 442 90 462 91 505 92 550 93 630 94 685 95 730 96 760 97 815 98 870 99 925 100 990 101 1098 102 1228 103 1340 104 1495 105 1610 106 1760 107 1890 108 2020 109 2068`]
]) series(P, list, 240, c, 5);
series(P, `0 850 1 765 2 715 3 680 4 665 5 650 6 625 7 618 8 632 9 603 10 625 11 640 12 668 13 693 14 685 15 655 16 640 17 610 18 560 19 495 20 465 21 445 22 425 23 370 24 330 25 305 26 288 27 292 28 338 30 338 31 295 32 262 33 250 34 235 35 205 36 170 37 160 38 145 39 135 40 135 41 140 42 148 43 188 44 220 45 240 46 255 47 267 48 262 49 275 50 297 52 297 53 284 54 295 55 318 56 332 57 327 58 327 59 321 60 333 61 350 62 363 63 395 64 440 65 490 66 518 67 527 68 540 69 558 70 567 71 575 72 585 73 575 74 540 75 520 76 515 77 500 78 490 79 448 80 418 81 405 82 385 83 375 84 385 85 402 86 398 87 402 88 420 89 418 90 445 91 478 92 515 93 560 94 630 95 662 96 673 97 650 98 680 99 730 100 780 101 850 102 970 103 1070 104 1180 105 1320 106 1435 107 1575 108 1675 109 1708`, 240, '#ff28ff', 2);
series(P, `0 1068 1 1035 2 970 3 915 4 890 5 860 6 813 7 832 8 840 9 830 10 842 11 835 12 838 13 858 14 870 15 830 16 812 17 768 18 728 19 665 20 610 21 580 22 562 23 560 24 520 25 488 26 470 27 483 28 545 29 575 30 552 31 535 32 480 33 458 34 415 35 390 36 350 37 318 38 303 39 295 40 280 41 278 42 300 43 340 44 365 45 375 46 380 47 385 48 392 49 402 50 405 51 415 52 423 53 416 54 422 55 437 56 450 57 458 58 458 59 447 60 452 61 465 62 482 63 510 64 555 65 592 66 618 67 632 68 632 69 640 70 650 71 660 72 668 73 668 74 655 75 640 76 632 77 615 78 598 79 565 80 550 81 530 82 518 83 506 84 518 85 525 86 518 87 530 88 555 89 585 90 625 91 655 92 680 93 765 94 818 95 842 96 835 97 842 98 890 99 930 100 990 101 1090 102 1210 103 1390 104 1540 105 1640 106 1740 107 1870 108 1960 109 1985`, 240, '#ff28ff', 2);
const dots = add(P, 'g', { class: 'dots' });
for (const [c, list] of [
  ['#dc1c40', [[122,396],[202,472],[698,316],[874,324],[922,316],[970,344],[1210,368],[1402,356],[1434,344]]],
  ['#0a28ff', [[26,578],[138,552],[234,564],[714,416],[906,422],[938,420],[1194,464],[1226,460],[1418,478]]]])
  for (const [x, y] of list) add(dots, 'rect', { x: x - 6, y: y - 6, width: 12, height: 12, rx: 5, fill: c });

// levels and trade marks beside the last bar
add(P, 'rect', { x: 1752, y: 820, width: 116, height: 4, fill: '#8c1ccc' });
add(P, 'rect', { x: 1752, y: 856, width: 116, height: 4 });
draw(P, [[1702,902],[1730,889],[1754,881]], '#0a28ff', 2).setAttribute('stroke-dasharray', '6 6');
draw(P, [[1718,946],[1734,918],[1750,884]], '#0a28ff', 2).setAttribute('stroke-dasharray', '6 6');
for (const [x, y] of [[1701, 901], [1717, 945]])
  add(P, 'path', { d: `M${x - 5} ${y - 1}l5 -6 6 6v2l-6 6-5-6z`, fill: '#108010', stroke: '#fff', 'stroke-width': 2 });
add(P, 'path', { d: 'M1763 867v21l-3-3v-4l-7-5 7-6z', fill: '#98fb98', stroke: '#fff', 'stroke-width': 2 });
const note = (x, y, size, color, s) => { add(P, 'text', { x, y, fill: color, 'font-size': size, 'font-family': 'Liberation Sans, Arial, sans-serif' }).textContent = s; };
note(1816, 848, 22, '#808080', '1.2');
note(1855, 882, 26, '#000', '< 3:3 (1.2)');
add(P, 'path', { d: 'M1764 102h18l-9 10z', fill: '#708098' });
across(P, 1142, '#ff28ff', 4);

/* ---- zigzag pane ---- */
draw(layer('zz', 1162), [[10,1202],[23,1185],[1612,1185],[1627,1201],[1659,1201],[1674,1185],[1692,1185],[1706,1201],[1724,1201],[1739,1185],[1754,1185]], '#000', 2);

/* ---- rsi pane ---- */
const R = layer('rsi', 1214), b = '#0a28ff', r = '#ff1420';
const average = [
 [b, `0 378 6 378`], [r, `6 378 8 378`], [b, `8 378 9 378`], [r, `9 378 13 378`], [b, `13 378 17 378 18 372 20 370 23 362 26 360`],
 [r, `26 360 28 360`], [b, `28 360 34 358 35 353 41 353`], [r, `41 353 43 360 50 360`], [b, `50 360 52 366`],
 [r, `52 366 58 367 59 372 62 375 64 382 67 388 72 390`], [b, `72 390 77 390 78 384 82 384 83 376 85 376`],
 [r, `85 376 88 376 89 382 92 386 96 390 98 396 101 402 104 412 107 420 108 426 109 427`]];
const strength = [
 [b, `0 437 1 362 2 338 3 342 4 342 5 328 6 318`], [r, `6 318 7 408 8 408`], [b, `8 408 9 372`], ['#101040', `9 372 10 390`],
 [r, `10 390 11 405 12 420 13 428`], [b, `13 428 14 355 15 345 16 325 17 320 18 270 19 250 21 250`], [r, `21 250 22 295`],
 [b, `22 295 23 240 24 283`], [r, `24 283 25 285 26 300 27 380 28 420 29 370 30 360`], [b, `30 360 31 325 32 315 33 320 34 322 35 298 37 300`],
 [r, `37 300 38 322 40 325 41 340 42 410 43 458 44 430 45 400 46 407 47 407 48 412 49 410 50 406`], [b, `50 406 51 372 52 402 53 395`],
 [r, `53 390 54 430 55 452`], [b, `55 452 56 415 57 415 58 390 59 390`], [r, `59 390 60 412 61 430 62 470 63 500 64 534 65 534 66 500`],
 [b, `66 500 67 460 68 465 69 467 70 440 71 445 72 450 73 400 74 330 75 358 76 350 77 335 78 342 79 290 80 335 81 320 82 315`],
 [r, `82 315 83 340 84 382 85 383 86 368 87 402 88 402 89 443 90 422 91 460 92 470 93 510 94 510`], [b, `94 510 95 460 96 432 97 445`],
 [r, `97 445 98 480 99 480 100 510 101 545 102 570 103 570 104 596 105 568 106 572 107 582`], [b, `107 582 108 535 109 485`]];
for (const [c, list] of average) series(R, list, 1140, c, 4);
for (const [c, list] of strength) series(R, list, 1140, c, 5);
for (const y of [1227, 1247, 1267, 1287, 1307]) add(R, 'line', { x1: 12, x2: '101%', y1: y, y2: y, stroke: '#000', 'stroke-width': 2, 'stroke-dasharray': '6 6' });
series(R, `50.8 358 51 360 52 365`, 1140, '#000', 2);

/* ---- buy / sell pressure pane ---- */
const B = layer('bsp', 1364), g = '#108010', o = '#ffa028';
const buy = [
 [g, `0 910 1 860 2 860`], [b, `2 858 3 870`], [g, `3 868 4 868`], [b, `4 866 6.5 875`], [g, `7 885 8 885 9 868`], [b, `9 865 10 870 11 880 12 900 13 905`],
 [g, `13 905 14 862`], [b, `14 860 15 870`], [g, `15 868 16 868`], [b, `16 866 17 866`], [g, `17 866 18 850 19 850`], [b, `19 848 20 862 21 870 22 872`],
 [g, `22 872 23 832`], [b, `23 830 24 840`], [g, `24 838 25 838`], [b, `25 838 26 850 27 860 28 860`], [g, `28 860 29 820`], [b, `29 818 30 828`],
 [g, `30 826 31 805`], [b, `31 804 32 815 33 830 34 840`], [g, `34 840 35 826`], [b, `35 826 38 848 40 868 42 890 43 895`], [g, `43 895 44 890 45 885`],
 [b, `45 885 47 885 49 903 50 906`], [g, `50 910 51 910`], [b, `51 908 52 908`], [g, `52 910 53 912`], [b, `53 912 54 922`], [g, `54 922 55 930`], [b, `55 930 56 922 58 915 59 918 60 930 61 942 62 945 63 952 64 962 65 962`],
 [g, `65 965 66 958 67 955`], [b, `67 950 68 952 69 958`], [g, `69 963 70 950`], [b, `70 948 71 955 72 962`], [g, `72 965 73 965 74 945`], [b, `74 930 75 930`],
 [g, `75 930 77 930`], [b, `77 930 78 930`], [g, `78 928 79 915`], [b, `79 915 80 915`], [g, `80 915 81 905`], [b, `81 900 82 905 84 915`], [g, `84 917 85 918`],
 [b, `85 918 87 924`], [g, `87 925 88 925`], [b, `88 926 89 935`], [g, `89 935 90 920`], [b, `90 918 91 925 93 938`], [g, `93 940 94 938 95 912`],
 [b, `95 908 97 912 98 924`], [g, `98 928 99 928`], [b, `99 925 100 932 102 942`], [g, `102 942 103 915`], [b, `103 915 104 915`], [g, `104 918 105 903`],
 [b, `105 900 107 910`], [g, `107 912 108 880 109 848`]];
const sell = [
 [o, `0 878 1 882 2 895`], [r, `2 897 3 897`], [o, `3 895 4 903 5 910 6 918`], [r, `6 920 7 878`], [o, `7 873 8 882 9 888`], [r, `9 888 10 888`],
 [o, `10 878 11 888`], [r, `11 890 12 890`], [o, `12 890 14 892 16 900 18 918 19 930 20 935 21 940`], [r, `21 942 22 940`], [o, `22 932 23 935`],
 [r, `23 940 24 935`], [o, `24 925 25 928`], [r, `25 935 26 935 27 890 28 875`], [o, `28 872 30 885 35 918`], [r, `35 920 36 920`], [o, `36 920 37 928`],
 [r, `37 928 38 928`], [o, `38 925 41 938`], [r, `41 936 42 910 43 890`], [o, `43 888 45 905`], [r, `45 908 46 908`], [o, `46 908 47 908`], [r, `47 915 48 915`],
 [o, `48 915 51 930`], [r, `51 932 52 932`], [o, `52 925 53 925`], [r, `53 935 54 920 55 915`], [o, `55 912 56 915 57 920 58 927 60 932 61 933`],
 [r, `61 930 62 920 63 915 64 905`], [o, `64 900 65 902 67 922`], [r, `67 930 68 930`], [o, `68 918 70 930`], [r, `70 932 71 932`], [o, `71 932 74 940`],
 [r, `74 940 75 940`], [o, `75 935 76 940 79 948`], [r, `79 950 80 935`], [o, `80 932 82 940`], [r, `82 945 83 942 84 930`], [o, `84 925 86 935`],
 [r, `86 938 87 928`], [o, `87 928 88 928`], [r, `88 930 89 898`], [o, `89 895 90 898`], [r, `90 898 91 882`], [o, `91 880 92 882`], [r, `92 882 93 850`],
 [o, `93 848 95 868 96 875`], [r, `96 880 97 880 98 845`], [o, `98 842 99 852`], [r, `99 855 100 820 101 785 102 755`], [o, `102 750 103 765`],
 [r, `103 760 104 712`], [o, `104 710 105 730`], [r, `105 730 106 685 107 685`], [o, `107 680 108 700 109 722`]];
const flat = segs => segs.flatMap(([, l]) => points(l, 1140));
function at(pts, x) {
  const k = pts.findIndex(p => p[0] >= x), q = pts[k], p = pts[k - 1] || q;
  return q[0] === p[0] ? q[1] : p[1] + (q[1] - p[1]) * (x - p[0]) / (q[0] - p[0]);
}
const up = flat(buy), dn = flat(sell);
for (let x = 11; x < 1755; x += 2) {
  const a = at(up, x), c = at(dn, x);
  add(B, 'rect', { x, y: Math.min(a, c), width: 2, height: Math.abs(a - c), fill: a < c ? '#0c600c' : '#7c0408' });
}
for (const [c, l] of buy) series(B, l, 1140, c, 7);
for (const [c, l] of sell) series(B, l, 1140, c, 7);
for (const l of [`21.4 898 21.8 925`, `25.3 850 26 915`, `26.3 855 26.9 885`, `37.4 868 37.9 915`, `102.2 793 103 905`, `107.4 755 107.9 865`, `108.5 770 108.9 830`])
  series(B, l, 1140, '#b0e0e4', 1).setAttribute('stroke-dasharray', '2 4');

/* ---- scales ---- */
function label(id, y, text, cls = '') {
  const s = document.createElement('span');
  s.textContent = text; s.className = cls; s.style.top = y + 'px';
  document.getElementById(id).appendChild(s);
}
for (let k = 0; k < 14; k++) label('priceScale', (k < 8 ? 31 : 32) + 72 * k, (0.6929 - 0.00025 * k).toFixed(5), 'tick');
label('priceScale', 723, '0.69050', 'tag');
label('priceScale', 1041, '0.68940', 'tag tag-pink');
label('zzScale', 14, '1.5'); label('zzScale', 25, '0.00'); label('zzScale', 36, '-1.5');
[70, 60, 50, 40, 30].forEach((v, k) => label('rsiScale', 15 + 20 * k, v, 'levelmark'));
label('rsiScale', 15, '75.5905'); label('rsiScale', 119, '11.7295');
label('bspScale', 15, '0.0001'); label('bspScale', 93, '0');
for (const t of ['2023', '01:35', '02:15', '02:55', '03:35', '04:15', '04:55', '05:35', '06:15', '06:55', '07:35', '08:15', '08:55', '09:35']) {
  const s = document.createElement('span');
  s.textContent = '13 Feb ' + t;
  document.getElementById('times').appendChild(s);
}
// connection meter
for (let k = 0; k < 8; k++) {
  const cut = 18 - 2 * k;
  add(document.getElementById('net'), 'rect', { x: 6 * k, y: 0, width: 4, height: cut, fill: '#5c7814' });
  add(document.getElementById('net'), 'rect', { x: 6 * k, y: cut + 2, width: 4, height: 24 - cut, fill: '#083c58' });
}
</script>
</body>
</html>
